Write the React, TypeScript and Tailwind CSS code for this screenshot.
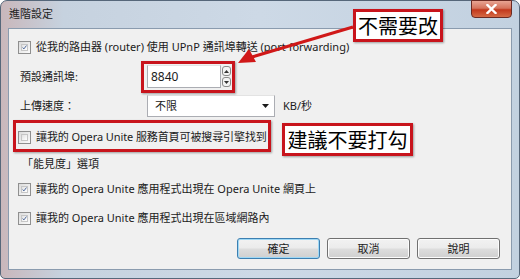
import React from "react";

const F = "font-['Noto_Sans','Noto_Sans_CJK_TC',sans-serif]";

function Check({ checked }: { checked: boolean }) {
  return (
    <div className="w-[13px] h-[13px] border border-[#8f8f8f] bg-gradient-to-br from-[#dcdcdc] to-[#fbfbfb] p-[2px] shrink-0">
      <div className="w-full h-full border border-[#c6c6c6] bg-gradient-to-br from-[#e2e2e2] to-[#ffffff] flex items-center justify-center">
        {checked && (
          <svg width="9" height="9" viewBox="0 0 9 9">
            <path d="M1 4.5 L3.5 7 L8 1" fill="none" stroke="#3a5890" strokeWidth="1.6" />
          </svg>
        )}
      </div>
    </div>
  );
}

function Btn({ label, def }: { label: string; def?: boolean }) {
  return (
    <div
      className={`w-[83px] h-[21px] rounded-[3px] border flex items-center justify-center text-[11px] text-[#1b1b1b] ${
        def
          ? "border-[#3c7fb1] shadow-[inset_0_0_0_1px_#9fd8f5]"
          : "border-[#707070] shadow-[inset_0_0_0_1px_#fcfcfc]"
      } bg-[linear-gradient(#f2f2f2_0%,#ebebeb_48%,#dddddd_52%,#cfcfcf_100%)]`}
    >
      {label}
    </div>
  );
}

export default function App() {
  return (
    <div className={`w-[520px] h-[279px] bg-white relative overflow-hidden ${F}`}>
      <div className="w-full h-full rounded-t-[7px] rounded-b-[5px] border border-[#56677a] bg-[linear-gradient(90deg,#c9b7bb_0%,#c6d2df_12%,#cdd9e6_50%,#c2d1e0_100%)] flex flex-col px-[7px] pb-[8px]">
        {/* title bar */}
        <div className="h-[27px] flex items-start justify-between shrink-0">
          <div className="pt-[5px] pl-[1px] text-[11px] text-[#1e1e1e] leading-[16px]">進階設定</div>
          <div className="w-[41px] h-[18px] mt-[-1px] rounded-b-[4px] border border-[#6b2a22] bg-[linear-gradient(#e8a493_0%,#d5735c_45%,#c2381c_55%,#d56a45_100%)] flex items-center justify-center">
            <svg width="11" height="10" viewBox="0 0 11 10">
              <path d="M1.5 1 L9.5 9 M9.5 1 L1.5 9" stroke="#ffffff" strokeWidth="2.4" strokeLinecap="square" />
            </svg>
          </div>
        </div>
        {/* content panel */}
        <div className="flex-1 border border-[#8a9bae] bg-[#f0f0f0] flex flex-col text-[11px] text-[#1b1b1b] leading-[16px] pl-[9px] pr-[11px]">
          <div className="h-[16px] mt-[10px] flex items-center gap-[5px]">
            <Check checked />
            <span>從我的路由器 (router) 使用 UPnP 通訊埠轉送 (port forwarding)</span>
          </div>
          <div className="h-[23px] mt-[10px] flex items-center">
            <span className="pl-[2px] w-[129px]">預設通訊埠:</span>
            <div className="w-[74px] h-[23px] bg-white border border-[#abadb3] border-t-[#e3e3e3] flex items-center pl-[3px] text-[12px]">8840</div>
            <div className="flex flex-col gap-[1px] ml-[1px]">
              <div className="w-[9px] h-[10px] rounded-[3px] border border-[#8a8a8a] bg-[#f3f3f3] flex items-center justify-center">
                <svg width="5" height="3" viewBox="0 0 5 3"><path d="M0 3 L2.5 0 L5 3 Z" fill="#333" /></svg>
              </div>
              <div className="w-[9px] h-[10px] rounded-[3px] border border-[#8a8a8a] bg-[#f3f3f3] flex items-center justify-center">
                <svg width="5" height="3" viewBox="0 0 5 3"><path d="M0 0 L2.5 3 L5 0 Z" fill="#333" /></svg>
              </div>
            </div>
          </div>
          <div className="h-[22px] mt-[7px] flex items-center">
            <span className="pl-[2px] w-[129px]">上傳速度：</span>
            <div className="w-[128px] h-[22px] bg-white border border-[#abadb3] border-t-[#e3e3e3] flex items-center justify-between pl-[7px] pr-[5px]">
              <span>不限</span>
              <svg width="7" height="4" viewBox="0 0 7 4"><path d="M0 0 L7 0 L3.5 4 Z" fill="#1a1a1a" /></svg>
            </div>
            <span className="ml-[8px]">KB/秒</span>
          </div>
          <div className="h-[16px] mt-[12px] flex items-center gap-[5px]">
            <Check checked={false} />
            <span className="tracking-[-0.1px]">讓我的 Opera Unite 服務首頁可被搜尋引擎找到</span>
          </div>
          <div className="h-[16px] mt-[11px] pl-[4px] flex items-center">「能見度」選項</div>
          <div className="h-[16px] mt-[9px] flex items-center gap-[5px]">
            <Check checked />
            <span>讓我的 Opera Unite 應用程式出現在 Opera Unite 網頁上</span>
          </div>
          <div className="h-[16px] mt-[13px] flex items-center gap-[5px]">
            <Check checked />
            <span>讓我的 Opera Unite 應用程式出現在區域網路內</span>
          </div>
          <div className="mt-[12px] flex justify-end gap-[7px]">
            <Btn label="確定" def />
            <Btn label="取消" />
            <Btn label="說明" />
          </div>
        </div>
      </div>

      {/* annotations */}
      <div className="absolute left-[141px] top-[61px] w-[94px] h-[32px] border-[3px] border-[#c8141c] shadow-[1px_1px_2px_rgba(0,0,0,0.35)]" />
      <div className="absolute left-[13px] top-[120px] w-[258px] h-[32px] border-[3px] border-[#c8141c] shadow-[1px_1px_2px_rgba(0,0,0,0.35)]" />
      <div className="absolute left-[353px] top-[9px] w-[90px] h-[33px] border-[3px] border-[#c8141c] bg-white shadow-[1px_1px_2px_rgba(0,0,0,0.35)] flex items-center justify-center text-[20px] text-black leading-none font-['Noto_Sans_CJK_TC',sans-serif]">
        不需要改
      </div>
      <div className="absolute left-[282px] top-[123px] w-[131px] h-[33px] border-[3px] border-[#c8141c] bg-white shadow-[1px_1px_2px_rgba(0,0,0,0.35)] flex items-center justify-center text-[20px] text-black leading-none font-['Noto_Sans_CJK_TC',sans-serif]">
        建議不要打勾
      </div>
      <svg className="absolute left-0 top-0" width="520" height="279" viewBox="0 0 520 279">
        <line x1="353" y1="27" x2="252" y2="57" stroke="#d01818" strokeWidth="3" />
        <path d="M238 63 L249 49 L256 62 Z" fill="#d01818" />
      </svg>
    </div>
  );
}
